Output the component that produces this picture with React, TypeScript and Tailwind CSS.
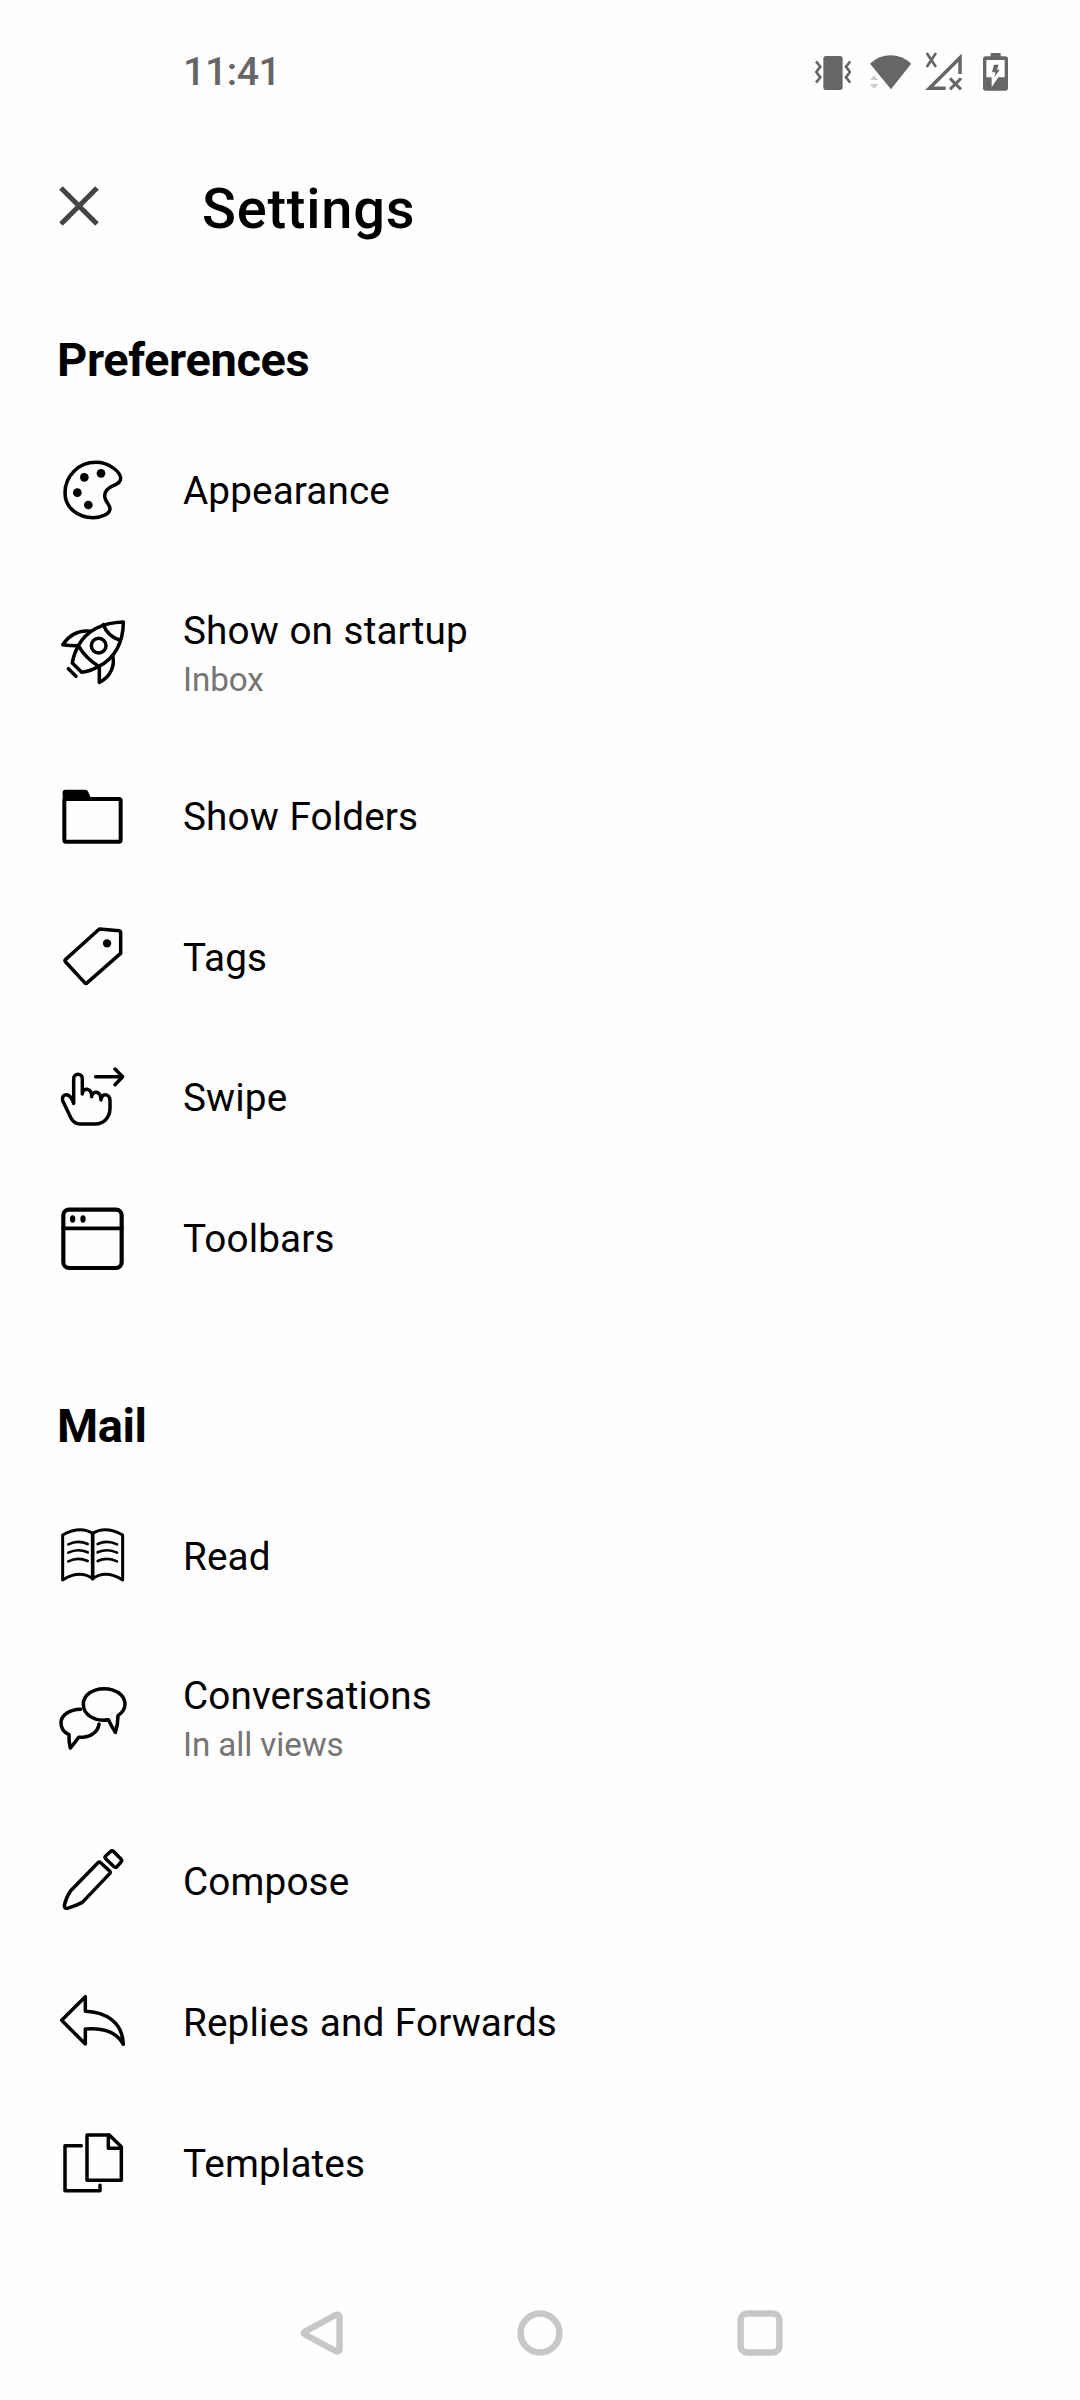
import React from 'react';

interface IconProps {
    children: React.ReactNode;
}

interface SettingsItem {
    title: string;
    subtitle?: string;
    icon: React.ReactNode;
}

interface SettingsSection {
    heading: string;
    items: SettingsItem[];
}

const Icon = ({ children }: IconProps) => (
    <svg
        viewBox="0 0 192 192"
        className="size-16 shrink-0 overflow-visible"
        fill="none"
        stroke="#000"
        strokeWidth={10.5}
        strokeLinecap="round"
        strokeLinejoin="round"
    >
        {children}
    </svg>
);

const PaletteIcon = () => (
    <Icon>
        <path d="M108 10C146 10 182 38 182 58C182 72 171 75 160 80C144 87 134 95 134 110C134 128 150 136 150 149C150 164 126 176 100 176C54 176 15 147 15 102C15 50 56 10 108 10Z" />
        <g fill="#000" stroke="none">
            <circle cx="123" cy="43" r="13" />
            <circle cx="73" cy="55" r="13" />
            <circle cx="52" cy="101" r="13" />
            <circle cx="85" cy="138" r="13" />
        </g>
    </Icon>
);

const RocketIcon = () => (
    <Icon>
        <path d="M190 0C135 2 84 18 55 71Q76 108 116 133C163 110 190 62 190 0Z" />
        <path d="M130 8Q142 42 178 54" />
        <path d="M55 71Q40 100 37 123L65 151Q92 148 116 133" />
        <path d="M90 28C56 24 28 40 8 68Q28 71 53 71" />
        <path d="M158 101C166 132 150 166 118 181V134" />
        <path d="M25 140L48 163" />
        <circle cx="116" cy="71" r="22" />
    </Icon>
);

const FolderIcon = () => (
    <Icon>
        <rect x="13" y="42" width="169" height="128" rx="5" strokeWidth={12} />
        <path d="M8 46V22Q8 14 16 14H76Q81 14 84 19L92 38V46Z" fill="#000" stroke="none" />
    </Icon>
);

const TagIcon = () => (
    <Icon>
        <path d="M118 12L178 17Q182 18 182 22V85L82 173Q78 177 74 173L17 111Q13 107 17 103Z" />
        <circle cx="141" cy="55" r="12.5" fill="#000" stroke="none" />
    </Icon>
);

const SwipeIcon = () => (
    <Icon>
        <path d="M41 112V38A13 13 0 0 1 67 38V84C68 64 95 64 95 92C97 74 122 72 123 102C124 80 150 82 150 104V126C150 156 130 174 106 174H60C48 174 40 168 34 158L8 104C3 84 28 74 41 112Z" />
        <path d="M107 32H187M165 9L188 32L165 56" />
    </Icon>
);

const ToolbarsIcon = () => (
    <Icon>
        <rect x="10" y="11" width="175" height="175" rx="17" strokeWidth={12.5} />
        <path d="M10 67H185" strokeWidth={11.5} />
        <g fill="#000" stroke="none">
            <ellipse cx="38" cy="39" rx="8" ry="11" />
            <ellipse cx="69" cy="39" rx="8" ry="11" />
        </g>
    </Icon>
);

const BookIcon = () => (
    <Icon>
        <path d="M8 33Q60 4 98 28Q136 4 188 33V168Q136 136 98 164Q60 136 8 168Z" strokeWidth={9} />
        <path d="M98 28V164" strokeWidth={11} />
        <path
            d="M25 61Q54 47 83 60M25 86Q54 72 83 85M25 112Q54 98 83 111M113 60Q142 47 171 61M113 85Q142 72 171 86M113 111Q142 98 171 112"
            strokeWidth={8}
        />
    </Icon>
);

const ConversationsIcon = () => (
    <Icon>
        <path d="M145 98C105 105 70 84 70 52C70 24 98 5 132 5C167 5 195 24 195 52C195 66 187 77 174 86Q174 112 166 136Q155 118 145 98Z" />
        <path d="M62 67C28 68 3 84 3 108C3 124 12 136 27 143Q26 164 31 183Q44 168 56 151C90 152 114 136 117 111" />
    </Icon>
);

const PencilIcon = () => (
    <Icon>
        <path d="M114 38Q118 34 122 38L150 64Q152 68 149 71L67 157Q46 168 22 175Q12 176 13 166Q18 142 32 122Z" />
        <path d="M151 5Q155 1 160 4L183 27Q187 31 183 36L171 50Q167 54 162 50L137 26Q133 22 137 18Z" />
    </Icon>
);

const ReplyIcon = () => (
    <Icon>
        <path d="M5 91L76 20V64C136 66 188 96 190 163C170 126 134 112 76 117V162Z" />
    </Icon>
);

const TemplatesIcon = () => (
    <Icon>
        <path d="M81 12H148L184 47V148H81Z" />
        <path d="M145 12V52H184" />
        <path d="M64 44H15V179H120V163" />
    </Icon>
);

const sections: SettingsSection[] = [
    {
        heading: 'Preferences',
        items: [
            { title: 'Appearance', icon: <PaletteIcon /> },
            { title: 'Show on startup', subtitle: 'Inbox', icon: <RocketIcon /> },
            { title: 'Show Folders', icon: <FolderIcon /> },
            { title: 'Tags', icon: <TagIcon /> },
            { title: 'Swipe', icon: <SwipeIcon /> },
            { title: 'Toolbars', icon: <ToolbarsIcon /> },
        ],
    },
    {
        heading: 'Mail',
        items: [
            { title: 'Read', icon: <BookIcon /> },
            { title: 'Conversations', subtitle: 'In all views', icon: <ConversationsIcon /> },
            { title: 'Compose', icon: <PencilIcon /> },
            { title: 'Replies and Forwards', icon: <ReplyIcon /> },
            { title: 'Templates', icon: <TemplatesIcon /> },
        ],
    },
];

const StatusBar = () => (
    <div className="flex h-36 shrink-0 items-center justify-between pl-[183px] pr-[72px]">
        <p className="text-[39.4px] font-medium tracking-[-0.5px] text-[#666666]">11:41</p>
        <div className="flex items-center">
            {/* Vibrate */}
            <svg viewBox="105 66 109 120" className="h-10 w-[36.3px]" fill="none" stroke="#666" strokeWidth={8}>
                <path d="M108 94L121 110L109 126L121 142L108 158M211 94L198 110L210 126L198 142L211 158" />
                <rect x="130" y="78" width="58" height="102" rx="8" fill="#666" stroke="none" />
            </svg>
            {/* Wifi */}
            <svg viewBox="271 66 124 120" className="ml-[19px] h-10 w-[41.3px]">
                <path d="M334 178L271 101Q299 76 333 76Q367 76 395 101Z" fill="#666" />
                <path d="M283 136L296 150H271ZM271 162H296L283 177Z" fill="#ccc" />
            </svg>
            {/* No signal */}
            <svg viewBox="436 66 111 120" className="ml-3.5 h-10 w-[37px]" fill="none" stroke="#666">
                <path d="M441 69L469 111M469 69L441 111" strokeWidth={8} />
                <path d="M498 175H449L541 83V132" strokeWidth={10.5} />
                <path d="M511 145L544 178M544 145L511 178" strokeWidth={9} />
            </svg>
            {/* Battery */}
            <svg viewBox="609 66 75 120" className="ml-[20.7px] h-10 w-[25px]">
                <path
                    d="M632 69H662V79H676Q684 79 684 87V174Q684 182 676 182H617Q609 182 609 174V87Q609 79 617 79H632Z"
                    fill="#666"
                />
                <path d="M619 90H674V142H655L635 172V142H619Z" fill="#fff" />
                <path d="M642 104H656L651 119H659L643 142L646 127H636Z" fill="#666" />
            </svg>
        </div>
    </div>
);

const Header = () => (
    <header className="flex h-32 shrink-0 items-center pl-[59px]">
        <button className="mb-1">
            <svg viewBox="0 0 40 40" className="size-10" stroke="#444" strokeWidth={5}>
                <path d="M2 2L38 38M38 2L2 38" />
            </svg>
        </button>
        <h1 className="ml-[103px] pt-0.5 text-[56px] font-medium tracking-[0.75px]">Settings</h1>
    </header>
);

const SettingsRow = ({ title, subtitle, icon }: SettingsItem) => (
    <li className={subtitle ? 'flex h-[185.2px] items-center gap-[59px]' : 'flex h-[140.6px] items-center gap-[59px]'}>
        {icon}
        <div className="flex flex-col pt-px">
            <p className="text-[38.7px] leading-[50px] tracking-[0.12px] [word-spacing:0.8px]">{title}</p>
            {subtitle && <p className="text-[33.2px] leading-[47px] tracking-[-0.1px] text-[#757575]">{subtitle}</p>}
        </div>
    </li>
);

const NavigationBar = () => (
    <nav className="mt-auto flex h-[135px] shrink-0 items-center justify-center gap-[172px] text-[#c7c7c7]">
        <svg viewBox="0 0 48 48" className="size-12" fill="none" stroke="currentColor" strokeWidth={6.5} strokeLinejoin="round">
            <path d="M43.5 7.5V40.5Q42.5 43 39.5 42L9 25.5Q6.5 24 9 22.5L39.5 6Q42.5 5 43.5 7.5Z" />
        </svg>
        <svg viewBox="0 0 48 48" className="size-12" fill="none" stroke="currentColor" strokeWidth={6.5}>
            <circle cx="24" cy="24" r="19.4" />
        </svg>
        <svg viewBox="0 0 48 48" className="size-12" fill="none" stroke="currentColor" strokeWidth={6.5}>
            <rect x="4.6" y="4.6" width="38.8" height="38.8" rx="6.5" />
        </svg>
    </nav>
);

export default function App() {
    return (
        <div className="flex h-[2400px] w-[1080px] flex-col bg-[#fefefe] font-['Roboto',sans-serif] text-black">
            <StatusBar />
            <Header />
            <main className="flex flex-col gap-14 pl-[60px] pt-[27.6px]">
                {sections.map((section) => (
                    <section key={section.heading}>
                        <h2 className="flex h-[121px] items-center pt-px text-[47px] font-bold tracking-[-0.4px]">
                            <span className="-ml-[3px]">{section.heading}</span>
                        </h2>
                        <ul>
                            {section.items.map((item) => (
                                <SettingsRow key={item.title} {...item} />
                            ))}
                        </ul>
                    </section>
                ))}
            </main>
            <NavigationBar />
        </div>
    );
}
